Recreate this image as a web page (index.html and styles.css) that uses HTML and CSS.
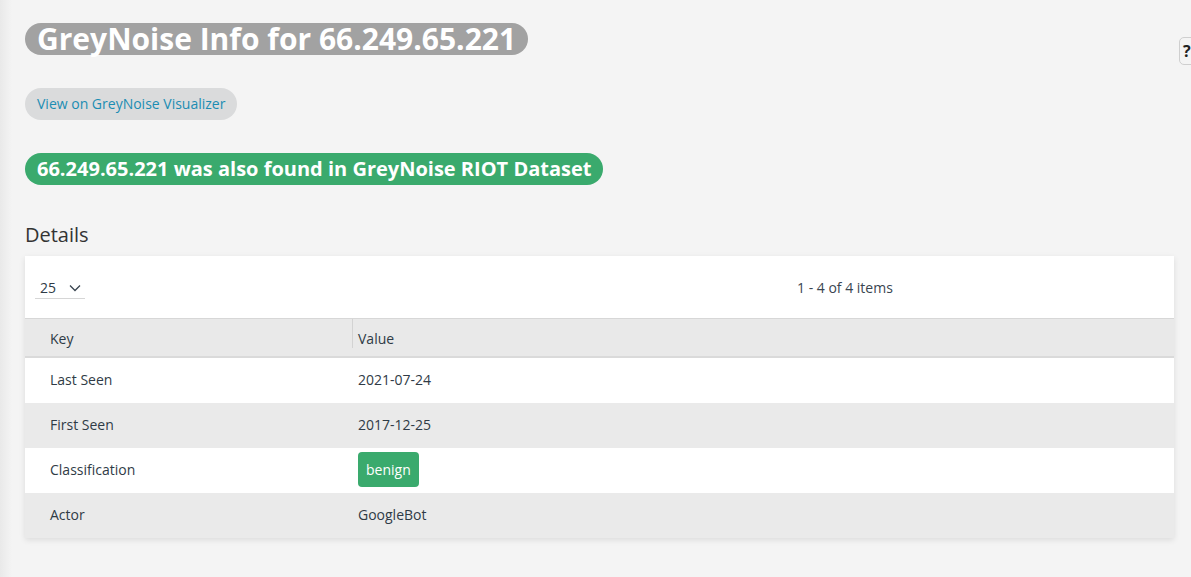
FILE: index.html
```html
<!DOCTYPE html>
<html>
<head>
<meta charset="utf-8">
<link rel="stylesheet" href="styles.css">
</head>
<body>
<div class="page">
  <h1 class="title"><span class="title-pill">GreyNoise Info for 66.249.65.221</span></h1>
  <div class="actions"><a class="viz-btn">View on GreyNoise Visualizer</a></div>
  <div class="riot"><span class="riot-pill">66.249.65.221 was also found in GreyNoise RIOT Dataset</span></div>
  <h2 class="section">Details</h2>
  <div class="card">
    <div class="toolbar">
      <div class="pager-size"><span>25</span>
        <svg width="12" height="8" viewBox="0 0 12 8"><path d="M1 1.5 L6 6.5 L11 1.5" fill="none" stroke="#3a4550" stroke-width="1.3"/></svg>
      </div>
      <div class="pager-info">1 - 4 of 4 items</div>
    </div>
    <div class="grid">
      <div class="head">
        <div class="hcell key">Key</div>
        <div class="hcell val">Value</div>
      </div>
      <div class="row"><div class="cell key">Last Seen</div><div class="cell val">2021-07-24</div></div>
      <div class="row alt"><div class="cell key">First Seen</div><div class="cell val">2017-12-25</div></div>
      <div class="row"><div class="cell key">Classification</div><div class="cell val"><span class="badge">benign</span></div></div>
      <div class="row alt"><div class="cell key">Actor</div><div class="cell val">GoogleBot</div></div>
    </div>
  </div>
</div>
<div class="help-tab"><span>?</span></div>
</body>
</html>
```

FILE: styles.css
```css
html, body {
  margin: 0;
  padding: 0;
}
body {
  background: linear-gradient(to right, #e9e9e9 0, #f4f4f4 12px);
  font-family: "Open Sans", "Liberation Sans", sans-serif;
  color: #2f3b46;
  height: 577px;
  overflow: hidden;
  position: relative;
}
.page {
  padding: 23px 17px 0 25px;
}
.title {
  margin: 0;
  font-size: 30px;
  font-weight: 700;
  line-height: 32px;
}
.title-pill {
  display: inline-block;
  background: #a2a2a2;
  color: #fff;
  border-radius: 16px;
  padding: 0 12px 0 12px;
  height: 32px;
}
.actions {
  margin-top: 33px;
}
.viz-btn {
  display: inline-block;
  background: #dadbdc;
  color: #1b8db3;
  font-size: 14px;
  line-height: 32px;
  height: 32px;
  padding: 0 12px;
  border-radius: 16px;
}
.riot {
  margin-top: 33px;
}
.riot-pill {
  display: inline-block;
  background: #3aaa6d;
  color: #fff;
  font-weight: 700;
  font-size: 20px;
  line-height: 32px;
  height: 32px;
  padding: 0 12px;
  border-radius: 16px;
}
.section {
  margin: 36px 0 7px 0;
  font-size: 20px;
  font-weight: 400;
  line-height: 28px;
  color: #333;
}
.card {
  background: #fff;
  box-shadow: 0 2px 6px rgba(0,0,0,0.10);
}
.toolbar {
  height: 62px;
  display: flex;
  align-items: center;
  position: relative;
  font-size: 14px;
}
.pager-size {
  margin-left: 10px;
  width: 50px;
  height: 22px;
  border-bottom: 1px solid #d6d6d6;
  display: flex;
  align-items: center;
  gap: 13px;
  padding-left: 5px;
  box-sizing: border-box;
  margin-top: 1px;
  font-size: 14px;
}
.pager-size svg {
  margin-top: 1px;
}
.pager-info {
  margin-left: 712px;
  color: #3a4550;
}
.head {
  display: flex;
  background: #e9e9e9;
  border-top: 1px solid #d7d7d7;
  border-bottom: 2px solid #dadada;
  height: 37px;
}
.hcell {
  font-size: 14px;
  line-height: 40px;
}
.head .key {
  width: 302px;
  padding-left: 25px;
  border-right: 1px solid #d3d3d3;
  margin-bottom: 8px;
}
.head .val {
  padding-left: 5px;
}
.row {
  display: flex;
  height: 45px;
  align-items: center;
  font-size: 14px;
  padding-bottom: 3px;
  box-sizing: border-box;
}
.row.alt {
  background: #eaeaea;
}
.cell.key {
  width: 308px;
  padding-left: 25px;
}
.cell.val {
  padding-left: 0;
}
.badge {
  display: inline-block;
  background: #3aaa6d;
  color: #fff;
  font-size: 14px;
  line-height: 35px;
  height: 35px;
  padding: 0 8px;
  border-radius: 4px;
}
.help-tab {
  position: absolute;
  left: 1179px;
  top: 37px;
  width: 30px;
  height: 28px;
  border: 1px solid #cfcfcf;
  border-radius: 5px;
  background: #f4f4f4;
  box-sizing: border-box;
  font-weight: 700;
  font-size: 16px;
  color: #222;
  padding: 2px 0 0 3px;
}
```
